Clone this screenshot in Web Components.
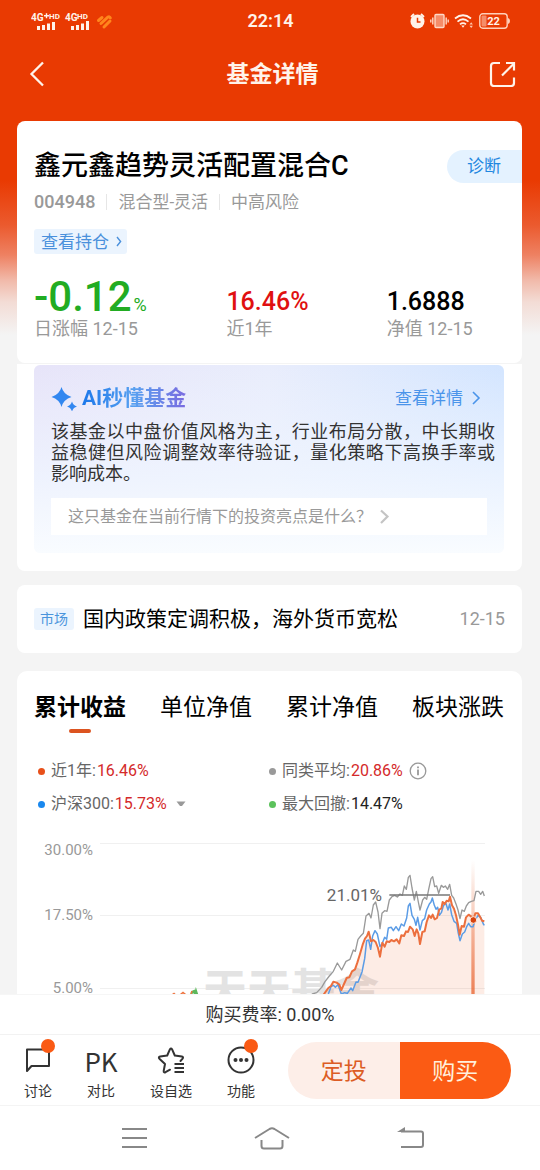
<!DOCTYPE html>
<html lang="zh-CN">
<head>
<meta charset="utf-8">
<meta name="viewport" content="width=device-width, initial-scale=1">
<title>基金详情</title>
<style>
  html, body { margin: 0; height: 100%; }
  body { font-family: Roboto, "Noto Sans CJK SC", sans-serif; background: #f4f4f4; color: #111; }
</style>
</head>
<body>
<fund-app>
  <status-bar slot="top"></status-bar>
  <title-bar slot="top">基金详情</title-bar>
  <fund-summary></fund-summary>
  <ai-brief>该基金以中盘价值风格为主，行业布局分散，中长期收益稳健但风险调整效率待验证，量化策略下高换手率或影响成本。</ai-brief>
  <market-news><span slot="tag">市场</span>国内政策定调积极，海外货币宽松<time slot="date" datetime="12-15">12-15</time></market-news>
  <return-panel></return-panel>
  <action-bar slot="bottom"></action-bar>
  <system-nav slot="bottom"></system-nav>
</fund-app>

<script>
const base = `
  *, *::before { box-sizing: border-box; }
  button { font: inherit; color: inherit; background: none; border: 0; margin: 0; padding: 0; cursor: pointer; }
  a { color: inherit; text-decoration: none; }
  svg { display: block; flex: none; }
`;
function define(name, css, html) {
  customElements.define(name, class extends HTMLElement {
    constructor() {
      super();
      this.attachShadow({ mode: 'open' }).innerHTML = `<style>${base}${css}</style>${html}`;
    }
  });
}

define('fund-app', `
  :host { display: flex; flex-direction: column; height: 100vh;
    background: linear-gradient(#e93a02 0, #e93a02 180px, #eb5a2e 225px, #ee8162 255px, #f1b9a9 280px, #f3dcd5 302px, #f4f4f4 335px); }
  main { flex: 1; min-height: 0; overflow: auto; scrollbar-width: none; padding: 15px 18px 0 17px; }
  main::-webkit-scrollbar { display: none; }
`, `<slot name="top"></slot><main><slot></slot></main><slot name="bottom"></slot>`);

define('status-bar', `
  :host { display: grid; grid-template-columns: 1fr auto 1fr; align-items: center; height: 42px; padding: 0 30px 0 31px; color: #fff3ea; }
  .time { font-size: 18px; line-height: 22px; font-weight: 600; }
  .right { display: flex; justify-content: flex-end; align-items: center; gap: 5px; }
`, `
  <svg width="82" height="20" viewBox="0 0 82 20" fill="#fff3ea" font-weight="700" font-family="Roboto, sans-serif">
    <text x="0" y="10" font-size="10">4G</text><path d="M13 4h5v1.4h-5zM14.8 2.2h1.4v5h-1.4z"/><text x="18" y="8" font-size="8">HD</text>
    <path d="M6 15h3v4H6zM11 14h3v5h-3zM16 12.500h3V19h-3zM21 11h3v8h-3z"/>
    <text x="34" y="10" font-size="10">4G</text><text x="46" y="8" font-size="8">HD</text>
    <path d="M40 15h3v4h-3zM45 14h3v5h-3zM50 12.500h3V19h-3zM55 10h3v9h-3z"/>
    <g stroke="#ff861c" stroke-width="3" stroke-linecap="round" fill="none"><path d="M67.500 9.500L71 6.500M70 12.500l7-6.500q1.500-.8 2.300.8"/><path d="M73 16l6-6"/></g>
  </svg>
  <span class="time">22:14</span>
  <div class="right">
    <svg width="15" height="16" viewBox="0 0 15 16"><circle cx="7.500" cy="8.500" r="7" fill="#fff3ea"/><path d="M1 4l3-3M14 4l-3-3" stroke="#fff3ea" stroke-width="1.800"/><path d="M7.500 4.800v4.200h3" fill="none" stroke="#e93a02" stroke-width="1.500"/></svg>
    <svg width="19" height="16" viewBox="0 0 19 16" fill="none" stroke="#ffd9c6" stroke-width="1.400"><rect x="5" y="1.500" width="9" height="13" rx="1" fill="#f58d69"/><path d="M2.800 4.500v7M.8 6.500v3M16.200 4.500v7M18.200 6.500v3"/></svg>
    <svg width="20" height="16" viewBox="0 0 20 16" fill="none" stroke="#fff3ea" stroke-width="1.800"><path d="M1 5.500q8-6.500 16 0M3.500 8.600q5.500-4.600 11 0M6 11.400q3-2.500 6 0"/><path d="M7.300 12.600h3.400L9 14.800z" fill="#fff3ea" stroke="none"/><path d="M15.500 11.500l1.700-2.300 1.700 2.300zM15.500 12.700l1.700 2.300 1.700-2.300z" fill="#ffc8ae" stroke="none"/></svg>
    <svg width="31" height="16" viewBox="0 0 31 16"><rect x=".8" y=".8" width="27.400" height="14.400" rx="3" fill="none" stroke="#ffd0ba" stroke-width="1.400"/><rect x="2.500" y="2.500" width="5" height="11" rx="1" fill="#f58d69"/><path d="M29 5q2 .5 2 3t-2 3z" fill="#ffd0ba"/><text x="14.500" y="12" text-anchor="middle" font-size="11" font-weight="700" fill="#fff3ea" font-family="Roboto, sans-serif">22</text></svg>
  </div>
`);

define('title-bar', `
  :host { display: grid; grid-template-columns: 1fr auto 1fr; align-items: center; height: 64px; padding: 0 24px 0 29px; color: #fff3ea; }
  h1 { margin: 0; padding-top: 2px; font-size: 23px; line-height: 30px; font-weight: 700; }
  .share { justify-self: end; }
  button { width: max-content; }
`, `
  <button aria-label="返回"><svg width="16" height="26" viewBox="0 0 16 26" fill="none" stroke="currentColor" stroke-width="2.300"><path d="M14 1.500L2.500 13 14 24.500"/></svg></button>
  <h1><slot></slot></h1>
  <button class="share" aria-label="分享"><svg width="27" height="26" viewBox="0 0 27 26" fill="none" stroke="currentColor" stroke-width="2.200"><path d="M11 2H5Q2 2 2 5v17q0 3 3 3h17q3 0 3-3v-5.500"/><path d="M13 14.500L24.500 3M17 2h8v7.500"/></svg></button>
`);

define('fund-stat', `
  :host { display: block; color: var(--tone, #000); }
  .value { display: block; font-size: 25px; line-height: 30px; font-weight: 500; }
  .label { display: block; font-size: 18px; line-height: 24px; color: #999; }
  :host([lead]) .value { font-size: 42px; line-height: 40px; }
  ::slotted(small) { margin-left: 2px; font-size: 18px; line-height: 20px; font-weight: 400; }
`, `<span class="value"><slot></slot></span><span class="label"><slot name="label"></slot></span>`);

define('fund-summary', `
  :host { display: block; background: #fff; border-radius: 8px; padding: 28px 0 22px 17px; }
  header { display: flex; justify-content: space-between; align-items: flex-end; }
  h2 { margin: 0; font-size: 27px; line-height: 34px; font-weight: 500; color: #000; }
  .diagnose { flex: none; height: 33px; padding: 0 21px 0 20px; border-radius: 17px 0 0 17px; background: #e4f2ff; color: #1f87e0; font-size: 17px; line-height: 33px; }
  .meta { display: flex; align-items: center; margin-top: 7px; font-size: 17px; line-height: 24px; color: #999; }
  .meta span + span { margin-left: 11px; padding-left: 12px; background: linear-gradient(#e6e6e6, #e6e6e6) 0 50% / 1px 16px no-repeat; }
  .meta .code { font-size: 18px; font-weight: 500; }
  .hold { display: flex; width: max-content; align-items: center; gap: 7px; height: 25px; margin-top: 15px; padding: 0 5px 0 7px; border-radius: 3px; background: #ebf4fe; color: #4a90dc; font-size: 17px; line-height: 24px; }
  .stats { display: grid; grid-template-columns: 192fr 160fr 135fr; align-items: end; margin-top: 23px; }
`, `
  <header><h2>鑫元鑫趋势灵活配置混合C</h2><button class="diagnose">诊断</button></header>
  <div class="meta"><span class="code">004948</span><span>混合型-灵活</span><span>中高风险</span></div>
  <a class="hold" href="#holdings">查看持仓<svg width="6" height="11" viewBox="0 0 6 11" fill="none" stroke="currentColor" stroke-width="1.400"><path d="M1 1l3.600 4.500L1 10"/></svg></a>
  <div class="stats">
    <fund-stat lead style="--tone:#22ac22">-0.12<small>%</small><span slot="label">日涨幅 12-15</span></fund-stat>
    <fund-stat style="--tone:#e01010">16.46%<span slot="label">近1年</span></fund-stat>
    <fund-stat>1.6888<span slot="label">净值 12-15</span></fund-stat>
  </div>
`);

define('ai-brief', `
  :host { display: block; margin-top: 1px; padding: 1px 18px 18px 17px; background: #fff; border-radius: 0 0 8px 8px; }
  section { padding: 19px 17px 18px; border-radius: 6px;
    background: linear-gradient(to bottom, rgba(247,251,255,0) 0, rgba(240,246,255,.8) 60%, #f9fcff 100%), linear-gradient(to right, #e7e4f9 0, #e9edfc 50%, #d3e5ff 100%); }
  header { display: flex; align-items: center; gap: 4px; }
  h3 { margin: 0; font-size: 21px; line-height: 28px; font-weight: 700; background: linear-gradient(to right, #1c78ea, #58a0f0 50%, #7a6be0); -webkit-background-clip: text; background-clip: text; color: transparent; }
  header a { display: flex; align-items: center; gap: 9px; margin-left: auto; margin-right: 6px; font-size: 17px; line-height: 24px; color: #4a94ea; }
  p { margin: 9px -8px 0 0; font-size: 18px; line-height: 21px; text-align: justify; color: #333; }
  .ask { display: flex; align-items: center; gap: 7px; width: 100%; height: 37px; margin-top: 14px; padding: 0 17px; background: #fff; color: #999; font-size: 16px; line-height: 24px; }
`, `
  <section>
    <header>
      <svg width="27" height="26" viewBox="0 0 27 26" fill="#3287f0"><path d="M10.500 2q2 7.500 10 10-8 2.500-10 10-2-7.500-10-10 8-2.500 10-10z"/><path d="M21 16.500q1.200 4 5 5-3.800 1-5 5-1.200-4-5-5 3.800-1 5-5z"/></svg>
      <h3>AI秒懂基金</h3>
      <a href="#detail">查看详情<svg width="9" height="14" viewBox="0 0 9 14" fill="none" stroke="currentColor" stroke-width="1.600"><path d="M1 1l6 6-6 6"/></svg></a>
    </header>
    <p><slot></slot></p>
    <button class="ask"><span>这只基金在当前行情下的投资亮点是什么？</span><svg width="11" height="15" viewBox="0 0 11 15" fill="none" stroke="#c4c4c4" stroke-width="2.200"><path d="M2 1.500l6.500 6L2 14"/></svg></button>
  </section>
`);

define('market-news', `
  :host { display: block; margin-top: 14px; background: #fff; border-radius: 8px; }
  a { display: flex; align-items: center; padding: 18px 17px; font-size: 21px; line-height: 32px; color: #000; }
  .tag { margin-right: 9px; padding: 0 6px; border-radius: 3px; background: #ebf4fe; color: #4a94dc; font-size: 14px; line-height: 22px; }
  .date { margin-left: auto; font-size: 18px; color: #999; }
`, `<a href="#news"><span class="tag"><slot name="tag"></slot></span><span><slot></slot></span><span class="date"><slot name="date"></slot></span></a>`);

define('legend-item', `
  :host { display: flex; align-items: center; font-size: 16px; line-height: 20px; color: #666; }
  :host::before { content: ""; width: 7px; height: 7px; margin-right: 6px; border-radius: 50%; background: var(--dot); }
  b { font-weight: 400; color: var(--value, #d42a2a); margin-left: 1px; }
  ::slotted(button) { display: flex; border: 0; padding: 0; background: none; }
`, `<span><slot></slot></span><b><slot name="value"></slot></b><slot name="extra"></slot>`);

define('return-panel', `
  :host { display: block; margin-top: 18px; padding: 19px 18px 0 17px; background: #fff; border-radius: 10px 10px 0 0; }
  nav { display: flex; justify-content: space-between; }
  nav button { display: flex; flex-direction: column; align-items: center; gap: 4px; font-size: 23px; line-height: 35px; color: #000; }
  nav button::after { content: ""; width: 22px; height: 4px; border-radius: 2px; }
  nav button[aria-selected="true"] { font-weight: 700; }
  nav button[aria-selected="true"]::after { background: #dc5420; }
  .legend { display: grid; grid-template-columns: 1fr 1fr; row-gap: 13px; margin: 28px 4px 16px; }
  .more { margin-left: 9px; } .info { margin-left: 6px; }
`, `
  <nav role="tablist">
    <button role="tab" aria-selected="true">累计收益</button><button role="tab" aria-selected="false">单位净值</button><button role="tab" aria-selected="false">累计净值</button><button role="tab" aria-selected="false">板块涨跌</button>
  </nav>
  <div class="legend">
    <legend-item style="--dot:#e8501a">近1年:<span slot="value">16.46%</span></legend-item>
    <legend-item style="--dot:#999">同类平均:<span slot="value">20.86%</span><button class="info" slot="extra" aria-label="说明"><svg width="18" height="18" viewBox="0 0 18 18" fill="none" stroke="#999" stroke-width="1.300"><circle cx="9" cy="9" r="7.800"/><path d="M9 4.500v1.800M9 7.600v5.600" stroke-width="1.800"/></svg></button></legend-item>
    <legend-item style="--dot:#1a88ee">沪深300:<span slot="value">15.73%</span><button class="more" slot="extra" aria-label="选择指数"><svg width="10" height="6" viewBox="0 0 10 6"><path d="M.5.5h9L6 5H4z" fill="#999"/></svg></button></legend-item>
    <legend-item style="--dot:#5cc25c;--value:#222">最大回撤:<span slot="value">14.47%</span></legend-item>
  </div>
  <return-chart></return-chart>
`);

/* Return series, drawn in the plot's own 810-unit-wide space. */
const peers = '40,640 80,560 127,492 140,488 155,472 165,455 178,438 190,424 202,399 215,420 228,394 240,388 250,360 256,364 264,328 272,318 280,310 288,258 297,250 303,264 310,225 317,216 324,246 330,296 336,250 344,242 351,244 358,210 366,200 374,196 382,201 390,192 397,196 403,168 409,178 415,142 420,136 426,174 433,210 439,184 445,216 450,240 458,210 464,202 470,208 476,178 483,146 488,140 494,170 500,168 506,190 514,166 520,172 526,168 533,178 539,163 545,196 551,204 558,222 564,240 570,266 576,240 583,244 589,228 596,218 604,214 612,212 618,184 626,184 632,193 638,184 643,198';
const index = '130,600 175,492 183,470 190,466 196,472 204,464 214,492 224,488 232,490 243,474 248,482 258,456 264,457 276,426 284,386 290,332 296,330 302,358 308,318 315,302 322,312 330,350 337,340 344,322 350,328 355,294 364,292 370,302 378,290 386,302 394,282 402,288 410,264 415,228 420,220 426,256 433,268 438,286 443,262 450,300 457,272 464,266 470,240 478,222 483,216 487,204 493,226 498,238 503,232 508,256 514,248 520,228 527,218 534,240 539,222 545,254 552,274 560,280 565,310 570,332 577,312 584,306 590,290 596,280 602,290 609,290 616,270 624,256 632,262 640,282 643,286';
const fund = '120,600 162,492 175,474 183,468 190,455 200,458 208,464 214,480 222,462 230,444 238,442 246,424 255,418 262,398 270,372 278,344 285,326 291,318 296,305 303,334 310,330 317,336 324,354 330,380 337,338 344,350 350,334 358,336 364,330 372,334 380,328 388,340 394,316 402,318 408,304 414,306 420,290 428,298 434,318 440,298 445,310 450,342 457,306 464,304 470,276 477,256 483,264 488,254 494,268 501,264 508,238 514,236 518,216 524,222 530,212 536,214 540,200 546,226 552,236 558,256 564,284 569,314 575,288 582,290 588,262 596,254 604,260 610,270 616,250 624,250 630,260 636,272 643,274';
define('return-chart', `
  :host { display: block; }
  .chart { width: 100%; height: auto; font-family: Roboto, "Noto Sans CJK SC", sans-serif; font-size: 15px; }
`, `
  <svg class="chart" viewBox="0 0 470 200" role="img" aria-label="累计收益走势">
    <defs>
      <linearGradient id="marker" x1="0" y1="0" x2="0" y2="1"><stop offset="0" stop-color="#e8612c" stop-opacity="0"/><stop offset=".75" stop-color="#e8612c" stop-opacity=".75"/><stop offset="1" stop-color="#e8612c" stop-opacity=".8"/></linearGradient>
    </defs>
    <g stroke="#f0f0f0"><path d="M66 13.500h385M66 85.500h385M66 158.500h385"/></g>
    <g fill="#999" text-anchor="end"><text x="59" y="25">30.00%</text><text x="59" y="90">17.50%</text><text x="59" y="163">5.00%</text></g>
    <text x="169" y="176" font-size="44" font-weight="700" fill="#e3e3e3">天天基金</text>
    <path d="M138 165l2-1.500 2 2M146 165l3-2.500 3 2.500" fill="none" stroke="#ee7440" stroke-width="1.600"/>
    <path d="M156 170l2-8 2-1 1 4 1-4 3 9" fill="none" stroke="#5cb85c" stroke-width="2.200"/><path d="M155 170l3-9" stroke="#ee7440" stroke-width="1.400"/>
    <svg x="236" y="0" width="270" height="200" viewBox="0 0 810 600" fill="none" stroke-linejoin="round">
      <polygon points="${fund} 643,640 100,640" fill="#f0602a" fill-opacity=".12"/>
      <rect x="604" y="90" width="10" height="520" fill="url(#marker)"/>
      <polyline points="${peers}" stroke="#999" stroke-width="4"/>
      <polyline points="${index}" stroke="#5b9ce6" stroke-width="4.500"/>
      <polyline points="${fund}" stroke="#ec6f3e" stroke-width="6"/>
      <path d="M358 195H540" stroke="#777" stroke-width="4"/>
      <circle cx="610" cy="270" r="10" fill="#d6430f" stroke="#ffe2d6" stroke-width="3"/>
    </svg>
    <text x="348" y="71" text-anchor="end" font-size="17" fill="#666">21.01%</text>
  </svg>
`);

define('tool-button', `
  :host { display: block; padding-top: 6px; color: #333; }
  button { display: flex; flex-direction: column; align-items: center; gap: 6px; position: relative; font-size: 14px; line-height: 20px; }
  .icon { display: flex; align-items: center; justify-content: center; width: 28px; height: 30px; font: 26px "Noto Sans CJK SC", sans-serif; }
  :host([dot]) button::after { content: ""; position: absolute; top: -6px; right: -3px; width: 14px; height: 14px; border-radius: 50%; background: #fa5a14; }
`, `<button><span class="icon"><slot name="icon"></slot></span><span><slot></slot></span></button>`);

define('action-bar', `
  :host { display: block; background: #fff; }
  .fee { border-top: 1px solid #f6f6f6; text-align: center; font-size: 18px; line-height: 39px; color: #333; }
  .bar { display: flex; align-items: center; gap: 35px; height: 72px; padding: 0 29px 0 24px; border-top: 1px solid #f2f2f2; border-bottom: 1px solid #f4f4f4; }
  .trade { display: flex; flex: 1; height: 57px; margin-left: -2px; border-radius: 29px; overflow: hidden; font-size: 23px; }
  .trade button { flex: 1; padding-bottom: 2px; }
  .plan { background: #fdeee8; color: #dc5c24; }
  .buy { background: #fb5b14; color: #fff0dc; }
`, `
  <div class="fee">购买费率: 0.00%</div>
  <div class="bar">
    <tool-button dot><svg slot="icon" width="26" height="26" viewBox="0 0 26 26" fill="none" stroke="#333" stroke-width="2" stroke-linejoin="round"><path d="M2 24V2.500h22V19H6.500z"/></svg>讨论</tool-button>
    <tool-button><span slot="icon">PK</span>对比</tool-button>
    <tool-button><svg slot="icon" width="28" height="28" viewBox="0 0 28 28" fill="none" stroke="#333" stroke-width="2" stroke-linecap="round" stroke-linejoin="round"><path d="M13 23.700l-4.500 2.500q-2 .8-1.800-1.300L8 18l-5.600-5.300q-1.400-1.600.8-2.200l7-1L13 3.200q1-1.600 2 0l2.800 6.300 7 1q2 .6.800 2.200L23.500 15"/><path d="M17.500 18H27M17.500 22H27M17.500 26H27" stroke-linecap="butt"/></svg>设自选</tool-button>
    <tool-button dot><svg slot="icon" width="28" height="28" viewBox="0 0 28 28"><circle cx="14" cy="14" r="12.500" fill="none" stroke="#333" stroke-width="2"/><g fill="#333"><circle cx="8.500" cy="14" r="2"/><circle cx="14" cy="14" r="2"/><circle cx="19.500" cy="14" r="2"/></g></svg>功能</tool-button>
    <div class="trade"><button class="plan">定投</button><button class="buy">购买</button></div>
  </div>
`);

define('system-nav', `
  :host { display: flex; align-items: center; justify-content: space-around; height: 64px; padding: 0 63px 0 68px; background: #fff; }
  button { padding: 6px 0; }
`, `
  <button aria-label="任务"><svg width="25" height="22" viewBox="0 0 25 22" stroke="#888" stroke-width="2"><path d="M0 2h25M0 11h25M0 20h25"/></svg></button>
  <button aria-label="主页"><svg width="36" height="24" viewBox="0 0 36 24" fill="none" stroke="#888" stroke-width="2"><path d="M1 12L15.500 3q2.500-1.300 5 0L35 12M7.500 14v6q0 2.500 2.500 2.500h16q2.500 0 2.500-2.500v-6"/></svg></button>
  <button aria-label="返回"><svg width="27" height="22" viewBox="0 0 27 22" fill="none" stroke="#888" stroke-width="2"><path d="M4 4.500h20q2 0 2 2V18q0 2-2 2H4"/><path d="M0 5l8-5v5z" fill="#888" stroke="none"/></svg></button>
`);
</script>
</body>
</html>
